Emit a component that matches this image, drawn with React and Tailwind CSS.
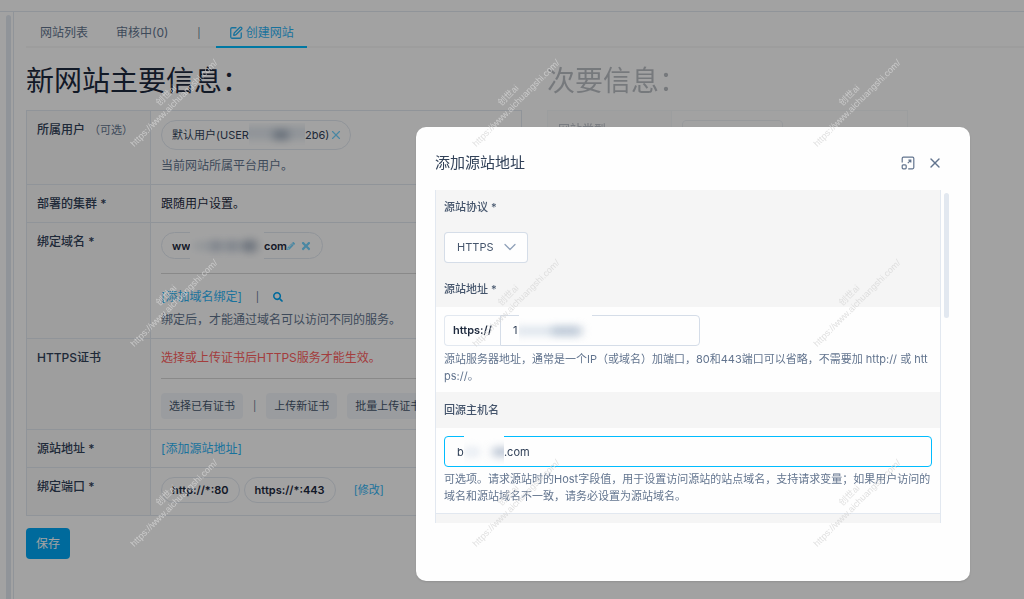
import React, { useState } from "react";
import { SquarePen, X, ChevronDown } from "lucide-react";
import { FaPencilAlt, FaTimes, FaSearch } from "react-icons/fa";

function Row({ label, note, children }) {
  return (
    <tr>
      <th
        scope="row"
        className="w-[124px] border border-slate-200 bg-[#f7f7f7] px-[10px] pt-[9px] pb-2 text-left align-top font-medium text-slate-700"
      >
        {label}
        {note && <span className="ml-1 text-[11px] font-normal text-slate-500">{note}</span>}
      </th>
      <td className="border border-slate-200 px-[10px] pt-[9px] pb-2 align-top">{children}</td>
    </tr>
  );
}

function Rule({ className }) {
  return <hr className={"border-t border-[#d6d6d6] " + className} />;
}

function Divider({ className }) {
  return <span className={"text-[10px] text-slate-500 " + className}>|</span>;
}

function SoftButton({ children }) {
  return (
    <button type="button" className="h-[26px] rounded bg-slate-100 px-2 text-[11px] text-slate-600">
      {children}
    </button>
  );
}

function PortPill({ children }) {
  return (
    <span className="flex h-[26px] items-center rounded-full border border-slate-200 px-[10px] text-[11px] font-semibold text-slate-800">
      {children}
    </span>
  );
}

function ExpandIcon() {
  return (
    <svg width="14" height="14" viewBox="0 0 14 14" fill="none" stroke="currentColor" strokeWidth="1.2">
      <path d="M1.2 6.4V2.4c0-.7.5-1.2 1.2-1.2h9.2c.7 0 1.2.5 1.2 1.2v9.2c0 .7-.5 1.2-1.2 1.2H7.2" />
      <rect x="1.2" y="8.8" width="4" height="4" rx="1" />
      <path d="M6.8 7.2 9.8 4.2M7.4 4.2h2.4v2.4" />
    </svg>
  );
}

const tabs = ["网站列表", "审核中(0)"];

function MainTable() {
  return (
    <table className="w-full table-fixed border-collapse text-[12px] leading-5">
      <tbody>
        <Row label="所属用户" note="（可选）">
          <div className="flex h-[30px] w-fit items-center rounded-full border border-slate-200 pr-[7px] pl-[10px] text-[11px] text-slate-700">
            默认用户(USER
            <span className="relative h-6 w-14 overflow-hidden">
              <span className="absolute top-1 -left-2 h-3 w-20 rounded-full bg-slate-300/60 blur-xs" />
              <span className="absolute top-2 left-6 h-2 w-4 rounded-full bg-slate-500/60 blur-xs" />
            </span>
            2b6)
            <button type="button" aria-label="移除用户" className="text-sky-300">
              <X size={14} strokeWidth={2} />
            </button>
          </div>
          <p className="mt-[6px] text-slate-500">当前网站所属平台用户。</p>
        </Row>
        <Row label="部署的集群 *">
          <p className="text-slate-800">跟随用户设置。</p>
        </Row>
        <Row label="绑定域名 *">
          <div className="relative flex h-[27px] w-fit items-center rounded-full border border-slate-200 px-[10px] text-[11px] font-semibold text-slate-800">
            ww
            <span className="w-[70px]" />
            <span className="absolute -top-px left-7 h-[27px] w-[74px] overflow-hidden bg-[#fefefe]">
              <span className="absolute top-3 left-1 h-1 w-14 rounded-full bg-slate-300 blur-xs" />
              <span className="absolute top-2 left-5 h-3 w-3 rounded-full bg-slate-400/40 blur-xs" />
              <span className="absolute top-2 left-9 h-3 w-3 rounded-full bg-slate-400/40 blur-xs" />
              <span className="absolute top-2 left-[52px] h-3 w-4 rounded-full bg-slate-500/50 blur-xs" />
            </span>
            .com
            <button type="button" aria-label="编辑域名" className="text-sky-300">
              <FaPencilAlt size={8} />
            </button>
            <button type="button" aria-label="删除域名" className="ml-[5px] text-sky-300">
              <FaTimes size={12} />
            </button>
          </div>
          <Rule className="mt-[14px] mb-[13px]" />
          <div className="flex items-center">
            <a href="#domain" className="text-sky-500/85">[添加域名绑定]</a>
            <Divider className="mx-[14px]" />
            <button type="button" aria-label="搜索" className="text-sky-500">
              <FaSearch size={10} />
            </button>
          </div>
          <p className="mt-[3px] text-slate-500">绑定后，才能通过域名可以访问不同的服务。</p>
        </Row>
        <Row label="HTTPS证书">
          <p className="text-[#ff6060]">选择或上传证书后HTTPS服务才能生效。</p>
          <Rule className="mt-[10px] mb-[14px]" />
          <div className="mb-[2px] flex items-center whitespace-nowrap">
            <SoftButton>选择已有证书</SoftButton>
            <Divider className="mx-[10px]" />
            <SoftButton>上传新证书</SoftButton>
            <span className="w-[10px]" />
            <SoftButton>批量上传证书</SoftButton>
          </div>
        </Row>
        <Row label="源站地址 *">
          <a href="#origin" className="text-sky-500/85">[添加源站地址]</a>
        </Row>
        <Row label="绑定端口 *">
          <div className="mb-1 flex items-center gap-1">
            <PortPill>http://*:80</PortPill>
            <PortPill>https://*:443</PortPill>
            <a href="#ports" className="ml-[14px] text-[11px] text-sky-500/85">[修改]</a>
          </div>
        </Row>
      </tbody>
    </table>
  );
}

function Page() {
  return (
    <div className="flex min-h-screen flex-col bg-[#fefefe]">
      <header className="h-3 border-b border-slate-200" />
      <div className="flex grow">
        <aside className="flex w-[14px] shrink-0 border-r border-slate-200 pt-[3px] pl-[6px]">
          <div className="w-[5px] rounded-t-full bg-slate-200" />
        </aside>
        <main className="min-w-0 grow pl-3">
          <nav className="flex h-9 items-end border-b-2 border-[#f6f6f6] text-[12px] text-slate-500">
            {tabs.map((tab) => (
              <a key={tab} href="#sites" className="flex h-[26px] items-center px-[14px]">
                {tab}
              </a>
            ))}
            <span className="flex h-[26px] items-center px-[15px] text-[10px]">|</span>
            <a
              href="#create"
              className="-mb-[2px] flex h-7 items-center gap-[3px] border-b-2 border-sky-400 px-[13px] text-sky-500/85"
            >
              <SquarePen size={14} strokeWidth={2.2} />
              创建网站
            </a>
          </nav>
          <div className="grid grid-cols-[496fr_361fr] gap-[25px] pt-[13px] pr-[116px]">
            <section>
              <h1 className="mb-[9px] text-[28px] leading-10 font-normal text-slate-800">新网站主要信息：</h1>
              <MainTable />
              <button type="button" className="mt-3 h-[31px] rounded bg-sky-500 px-[10px] text-[12px] text-white">
                保存
              </button>
            </section>
            <section className="opacity-30">
              <h2 className="mb-[9px] text-[28px] leading-10 font-normal text-slate-800">次要信息：</h2>
              <table className="w-full table-fixed border-collapse text-[12px] leading-5">
                <tbody>
                  <Row label="网站类型">
                    <input aria-label="网站类型" className="block h-[30px] w-[101px] rounded border border-slate-300" />
                  </Row>
                </tbody>
              </table>
            </section>
          </div>
        </main>
      </div>
    </div>
  );
}

function OriginDialog() {
  const [address, setAddress] = useState("1");
  const [host, setHost] = useState("b             .com");
  return (
    <div
      role="dialog"
      aria-labelledby="dialog-title"
      className="w-[554px] max-w-full rounded-[10px] bg-[#fefefe] pr-[21px] pb-[58px] pl-[19px] shadow-sm"
    >
      <div className="flex h-[63px] items-center gap-3 pt-[9px] pr-[6px] text-slate-500">
        <h2 id="dialog-title" className="grow text-[15px] text-slate-700">添加源站地址</h2>
        <button type="button" aria-label="最大化">
          <ExpandIcon />
        </button>
        <button type="button" aria-label="关闭">
          <X size={16} strokeWidth={2} />
        </button>
      </div>
      <div className="flex max-h-[333px] gap-[3px] overflow-hidden text-[11px]">
        <form className="min-w-0 grow border-x border-slate-200">
          <div className="bg-[#f5f5f5] px-2">
            <label htmlFor="protocol" className="block pt-[7px] leading-5 font-medium text-slate-600">
              源站协议 *
            </label>
            <div className="relative mt-[15px] w-[84px]">
              <select
                id="protocol"
                className="h-[31px] w-full appearance-none rounded border border-slate-300/80 bg-[#fefefe] pl-3 text-slate-600"
              >
                <option>HTTPS</option>
                <option>HTTP</option>
              </select>
              <ChevronDown
                size={20}
                strokeWidth={1.5}
                className="pointer-events-none absolute top-[5px] right-2 text-slate-400"
              />
            </div>
            <label htmlFor="address" className="block pt-4 pb-2 leading-5 font-medium text-slate-600">
              源站地址 *
            </label>
          </div>
          <div className="px-2 pt-2 pb-[7px]">
            <div className="relative flex h-[31px] w-[256px]">
              <span className="flex w-14 items-center justify-center rounded-l border border-r-0 border-slate-200 font-semibold text-slate-800">
                https://
              </span>
              <input
                id="address"
                value={address}
                onChange={(e) => setAddress(e.target.value)}
                className="min-w-0 grow rounded-r border border-slate-300/80 pl-3 text-slate-700 outline-none"
              />
              <div className="pointer-events-none absolute top-0 left-[75px] h-[28px] w-[73px] overflow-hidden bg-[#fefefe]">
                <span className="absolute top-3 -left-1 h-2 w-16 rounded-full bg-slate-300/70 blur-xs" />
                <span className="absolute top-3 left-8 h-2 w-8 rounded-full bg-slate-400/50 blur-xs" />
              </div>
            </div>
            <p className="mt-[5px] leading-[17px] break-all text-slate-500">
              源站服务器地址，通常是一个IP（或域名）加端口，80和443端口可以省略，不需要加 http:// 或 https://。
            </p>
          </div>
          <label
            htmlFor="host"
            className="block bg-[#f5f5f5] px-2 py-2 leading-5 font-medium text-slate-600"
          >
            回源主机名
          </label>
          <div className="px-2 pt-2 pb-2">
            <div className="relative">
              <input
                id="host"
                value={host}
                onChange={(e) => setHost(e.target.value)}
                className="block h-[31px] w-full rounded border border-sky-400 pl-3 text-slate-700 outline-none"
              />
              <div className="pointer-events-none absolute top-0 left-5 h-[28px] w-10 overflow-hidden bg-[#fefefe]">
                <span className="absolute top-3 left-0 h-2 w-4 rounded-full bg-slate-200 blur-xs" />
                <span className="absolute top-3 left-7 h-2 w-5 rounded-full bg-slate-400/70 blur-xs" />
              </div>
            </div>
            <p className="mt-1 leading-[17px] break-all text-slate-500">
              可选项。请求源站时的Host字段值，用于设置访问源站的站点域名，支持请求变量；如果用户访问的域名和源站域名不一致，请务必设置为源站域名。
            </p>
          </div>
          <div className="h-10 border-t border-slate-200 bg-[#f5f5f5]" />
        </form>
        <div className="mt-[3px] h-[125px] w-[5px] shrink-0 rounded-full bg-slate-200" />
      </div>
    </div>
  );
}

function Watermarks() {
  return (
    <div aria-hidden="true" className="pointer-events-none fixed inset-0 overflow-hidden">
      <div className="relative top-1 left-1 grid h-full w-full grid-cols-3 grid-rows-3">
        {Array.from({ length: 9 }, (_, i) => (
          <div key={i} className="flex items-center justify-center">
            <div className="-rotate-45 pb-[11px] text-center font-['Liberation_Sans','Noto_Sans_CJK_SC',sans-serif] text-[9px] leading-[11px] whitespace-nowrap text-[#d6d6d6]/75">
              创世ai
              <br />
              https://www.aichuangshi.com/
            </div>
          </div>
        ))}
      </div>
    </div>
  );
}

export default function App() {
  return (
    <div className="font-['Inter','Noto_Sans_CJK_SC',sans-serif]">
      <Page />
      <div className="fixed inset-0 flex items-end justify-end bg-black/36 pr-[54px] pb-[18px]">
        <OriginDialog />
      </div>
      <Watermarks />
    </div>
  );
}
